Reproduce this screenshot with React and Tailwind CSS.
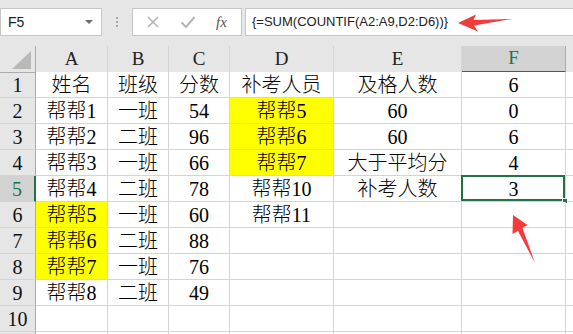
import React from 'react'

const COLS = ['A', 'B', 'C', 'D', 'E', 'F']

const ROWS = [
  ['姓名', '班级', '分数', '补考人员', '及格人数', '6'],
  ['帮帮1', '一班', '54', '帮帮5', '60', '0'],
  ['帮帮2', '二班', '96', '帮帮6', '60', '6'],
  ['帮帮3', '一班', '66', '帮帮7', '大于平均分', '4'],
  ['帮帮4', '二班', '78', '帮帮10', '补考人数', '3'],
  ['帮帮5', '一班', '60', '帮帮11', '', ''],
  ['帮帮6', '二班', '88', '', '', ''],
  ['帮帮7', '一班', '76', '', '', ''],
  ['帮帮8', '二班', '49', '', '', ''],
  ['', '', '', '', '', ''],
  ['', '', '', '', '', ''],
]

// yellow highlighted cells, key = "row-col"
const YELLOW = new Set(['2-3', '3-3', '4-3', '6-0', '7-0', '8-0'])

const cellFont = { fontFamily: '"Liberation Serif", "Noto Sans CJK SC", serif' }

function FormulaBar() {
  return (
    <div className="flex h-[46px] items-start gap-0 pt-[8px]">
      <div className="relative flex h-[28px] w-[102px] items-center border border-[#c6c6c6] bg-white pl-[7px] text-[14px] text-[#222]" style={{ fontFamily: '"Liberation Sans", sans-serif' }}>
        F5
        <span className="absolute right-[8px] top-[11px] h-0 w-0 border-x-[4px] border-t-[4px] border-x-transparent border-t-[#6d6d6d]" />
      </div>
      <div className="flex w-[30px] flex-col items-center gap-[2px] pt-[9px]">
        <span className="h-[2px] w-[2px] bg-[#a8a8a8]" />
        <span className="h-[2px] w-[2px] bg-[#a8a8a8]" />
        <span className="h-[2px] w-[2px] bg-[#a8a8a8]" />
      </div>
      <div className="flex h-[28px] w-[110px] items-center border border-[#c6c6c6] bg-white">
        <svg width="14" height="14" viewBox="0 0 14 14" className="ml-[13px]">
          <path d="M2 2 L12 12 M12 2 L2 12" stroke="#b4b4b4" strokeWidth="1.6" fill="none" />
        </svg>
        <svg width="16" height="14" viewBox="0 0 16 14" className="ml-[20px]">
          <path d="M1.5 7.5 L6 12 L14.5 2" stroke="#b4b4b4" strokeWidth="2" fill="none" />
        </svg>
        <span className="ml-[20px] text-[15px] italic text-[#555]" style={{ fontFamily: '"Liberation Serif", serif' }}>fx</span>
      </div>
      <div className="ml-[3px] flex h-[28px] flex-1 items-center border border-r-0 border-[#c6c6c6] bg-white pl-[6px] text-[13px] text-[#222]" style={{ fontFamily: '"Liberation Sans", sans-serif' }}>
        {'{=SUM(COUNTIF(A2:A9,D2:D6))}'}
      </div>
    </div>
  )
}

function Sheet() {
  return (
    <div className="grid grid-cols-[36px_72px_61px_61px_104px_128px_104px_1fr] auto-rows-[26px] font-light" style={cellFont}>
      {/* header row */}
      <div className="relative h-[27px] border-r border-b border-[#ababab] bg-[#e6e6e6]">
        <svg width="20" height="18" viewBox="0 0 20 18" className="absolute left-[12px] top-[5px]">
          <polygon points="19,0 19,18 0,18" fill="#b9b9b9" />
        </svg>
      </div>
      {COLS.map((c) => (
        <div
          key={c}
          className={
            c === 'F'
              ? 'flex h-[27px] items-center justify-center border-r border-[#ababab] border-b-2 border-b-[#217346] bg-[#d2d2d2] text-[19px] text-[#217346]'
              : 'flex h-[27px] items-center justify-center border-r border-b border-[#ababab] border-r-[#d4d4d4] bg-[#e6e6e6] text-[19px] text-[#222]'
          }
        >
          {c}
        </div>
      ))}
      <div className="h-[27px] border-b border-[#ababab] bg-[#e6e6e6]" />

      {ROWS.map((row, ri) => {
        const rn = ri + 1
        const sel = rn === 5
        return (
          <React.Fragment key={rn}>
            <div
              className={
                sel
                  ? 'flex items-center justify-center border-b border-[#d4d4d4] border-r-2 border-r-[#217346] bg-[#d2d2d2] text-[20px] text-[#217346]'
                  : 'flex items-center justify-center border-b border-[#d4d4d4] border-r border-r-[#ababab] bg-[#e6e6e6] text-[20px] text-[#111]'
              }
            >
              {rn < 11 ? rn : ''}
            </div>
            {row.map((v, ci) => {
              const yellow = YELLOW.has(`${rn}-${ci}`)
              const active = sel && ci === 5
              return (
                <div
                  key={ci}
                  className={
                    'relative flex items-center justify-center border-r border-b border-[#d4d4d4] text-[20px] leading-none text-black ' +
                    (yellow ? 'bg-[#ffff00]' : 'bg-white')
                  }
                >
                  {v}
                  {active && (
                    <>
                      <div className="pointer-events-none absolute -left-[1px] -top-[1px] -right-[0px] -bottom-[0px] border-2 border-[#217346]" />
                      <div className="absolute -bottom-[3px] -right-[3px] h-[6px] w-[6px] border border-white bg-[#217346]" />
                    </>
                  )}
                </div>
              )
            })}
            <div className="border-b border-[#d4d4d4] bg-white" />
          </React.Fragment>
        )
      })}
    </div>
  )
}

export default function App() {
  return (
    <div className="relative h-[334px] w-[573px] overflow-hidden bg-[#e6e6e6]">
      <FormulaBar />
      <Sheet />
      {/* red annotation arrows */}
      <svg width="573" height="334" className="pointer-events-none absolute left-0 top-0">
        <polygon points="458,23 476,14.5 473.5,20 512,19 474,25.5 478,31.5" fill="#f23b3b" />
        <polygon points="513,215 527.5,225 522.5,228 535,263 518,231 512.5,234" fill="#f23b3b" />
      </svg>
    </div>
  )
}
